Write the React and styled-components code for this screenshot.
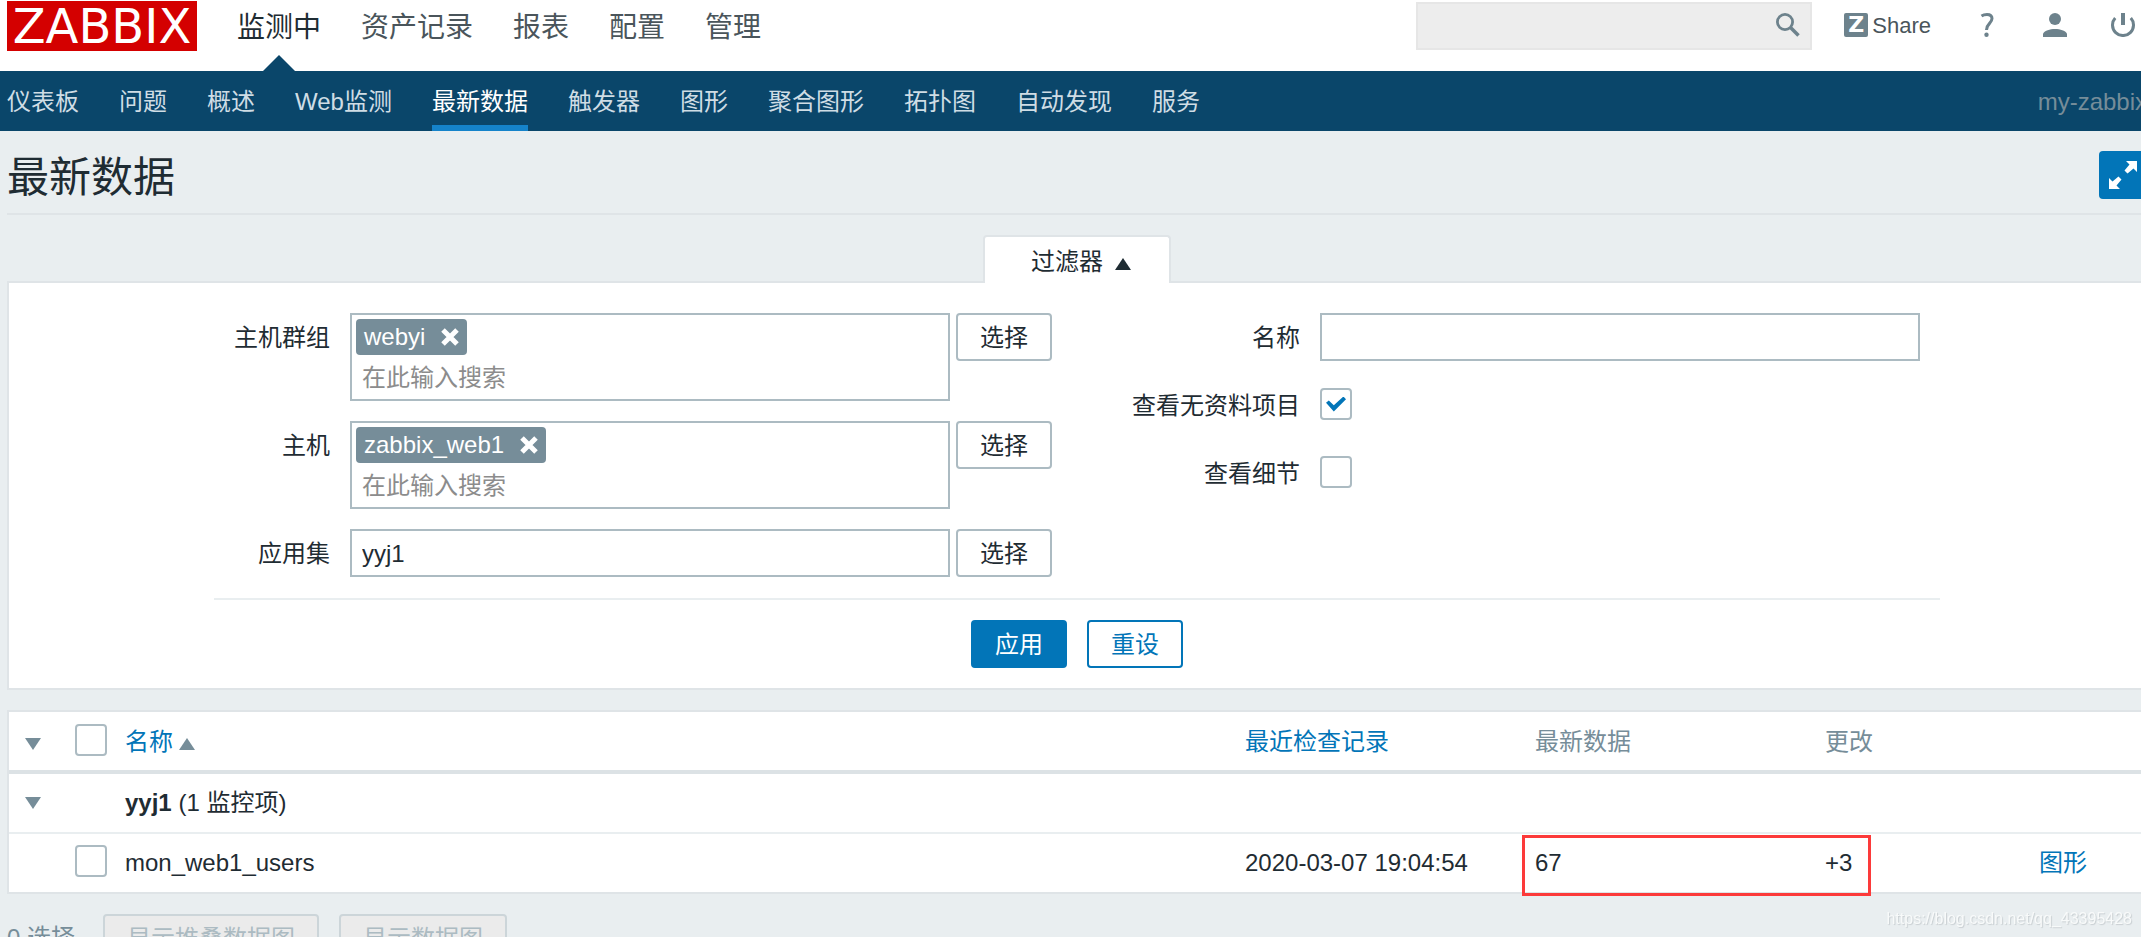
import { useState } from 'react';
import styled, { createGlobalStyle } from 'styled-components';

const menu = ['监测中', '资产记录', '报表', '配置', '管理'];
const submenu = ['仪表板', '问题', '概述', 'Web监测', '最新数据', '触发器', '图形', '聚合图形', '拓扑图', '自动发现', '服务'];

function MultiSelect({ id, label, tag }) {
    return (
        <Row>
            <Label htmlFor={id}>{label}</Label>
            <TagBox>
                <Tag>
                    {tag}
                    <RemoveTag type="button" aria-label="移除">
                        <svg width="18" height="18" viewBox="0 0 18 18">
                            <path d="M2 2L16 16M16 2L2 16" stroke="#fff" strokeWidth="5" />
                        </svg>
                    </RemoveTag>
                </Tag>
                <TagInput id={id} placeholder="在此输入搜索" />
            </TagBox>
            <Button type="button">选择</Button>
        </Row>
    )
}

export default function App() {
    const [showEmpty, setShowEmpty] = useState(true);
    const [details, setDetails] = useState(false);

    return (
        <>
            <GlobalStyle />
            <Page>
                <Top>
                    <Logo href="#">ZABBIX</Logo>
                    <Menu>
                        {menu.map((item, i) => <MenuLink href="#" key={item} $active={i === 0}>{item}</MenuLink>)}
                    </Menu>
                    <SearchBox>
                        <SearchInput aria-label="搜索" />
                        <IconButton type="button" aria-label="搜索">
                            <svg width="24" height="24" viewBox="0 0 24 24" fill="none" stroke="#6d828c">
                                <circle cx="9" cy="9" r="7.6" strokeWidth="2.8" />
                                <path d="M14.5 14.5L22.5 22.5" strokeWidth="3.6" />
                            </svg>
                        </IconButton>
                    </SearchBox>
                    <UserLinks>
                        <Share href="#"><ShareBadge>Z</ShareBadge><ShareText>Share</ShareText></Share>
                        <IconLink href="#" aria-label="帮助">
                            <svg width="24" height="24" viewBox="0 0 24 24" fill="none" stroke="#6d828c" strokeWidth="3">
                                <path d="M6.5 3C8 2 10 1.5 12 1.5C15.5 1.5 17 3.3 17 5.6C17 10.5 11.5 10.5 11.5 17" />
                                <circle cx="11.5" cy="21.8" r="2.2" fill="#6d828c" stroke="none" />
                            </svg>
                        </IconLink>
                        <IconLink href="#" aria-label="用户">
                            <svg width="24" height="24" viewBox="0 0 24 24" fill="#6d828c">
                                <circle cx="12" cy="6" r="6" />
                                <path d="M0 24V20.5C2 17.5 6.5 16 12 16S22 17.5 24 20.5V24Z" />
                            </svg>
                        </IconLink>
                        <IconLink href="#" aria-label="退出">
                            <svg width="24" height="24" viewBox="0 0 24 24" fill="none" stroke="#6d828c">
                                <path d="M12 0V12" strokeWidth="4" />
                                <path d="M4.2 5A10.5 10.5 0 1 0 19.8 5" strokeWidth="3" />
                            </svg>
                        </IconLink>
                    </UserLinks>
                </Top>
                <SubNav>
                    {submenu.map(item => <SubLink href="#" key={item} $active={item === '最新数据'}>{item}</SubLink>)}
                    <Server>my-zabbix</Server>
                </SubNav>
                <Content>
                    <TitleBar>
                        <Title>最新数据</Title>
                        <Expand type="button" aria-label="全屏">
                            <svg width="28" height="28" viewBox="0 0 28 28" fill="#fff">
                                <path d="M17 0H28V11L24.5 7.5L18.5 12.5L15.5 9.5L20.5 3.5Z" />
                                <path d="M0 17V28H11L7.5 24.5L12.5 18.5L9.5 15.5L3.5 20.5Z" />
                            </svg>
                        </Expand>
                    </TitleBar>
                    <FilterTab type="button">过滤器<Triangle $up $gap={12} $color="#1f2c33" /></FilterTab>
                    <Filter>
                        <Fields>
                            <Column>
                                <MultiSelect id="groups" label="主机群组" tag="webyi" />
                                <MultiSelect id="hosts" label="主机" tag="zabbix_web1" />
                                <Row>
                                    <Label htmlFor="application">应用集</Label>
                                    <TextInput id="application" defaultValue="yyj1" />
                                    <Button type="button">选择</Button>
                                </Row>
                            </Column>
                            <Column>
                                <Row>
                                    <Label htmlFor="name">名称</Label>
                                    <TextInput id="name" />
                                </Row>
                                <Row>
                                    <Label htmlFor="empty">查看无资料项目</Label>
                                    <CheckCell>
                                        <Check id="empty" checked={showEmpty} onChange={e => setShowEmpty(e.target.checked)} />
                                    </CheckCell>
                                </Row>
                                <Row>
                                    <Label htmlFor="details">查看细节</Label>
                                    <CheckCell>
                                        <Check id="details" checked={details} onChange={e => setDetails(e.target.checked)} />
                                    </CheckCell>
                                </Row>
                            </Column>
                        </Fields>
                        <Actions>
                            <Button type="button" $primary>应用</Button>
                            <Button type="button" $outline>重设</Button>
                        </Actions>
                    </Filter>
                    <Table>
                        <colgroup>
                            <col width="54" />
                            <col width="50" />
                            <col />
                            <col width="290" />
                            <col width="290" />
                            <col width="214" />
                            <col width="118" />
                        </colgroup>
                        <thead>
                            <tr>
                                <th><Triangle $color="#768d99" /></th>
                                <th><Check aria-label="全选" /></th>
                                <th><a href="#">名称<Triangle $up $gap={6} $color="#768d99" /></a></th>
                                <th><a href="#">最近检查记录</a></th>
                                <th>最新数据</th>
                                <th>更改</th>
                                <th></th>
                            </tr>
                        </thead>
                        <tbody>
                            <tr>
                                <td><Triangle $color="#768d99" /></td>
                                <td></td>
                                <td colSpan="5"><b>yyj1</b> (1 监控项)</td>
                            </tr>
                            <tr>
                                <td></td>
                                <td><Check aria-label="mon_web1_users" /></td>
                                <td>mon_web1_users</td>
                                <td>2020-03-07 19:04:54</td>
                                <MarkedCell>67<Mark /></MarkedCell>
                                <td>+3</td>
                                <td><a href="#">图形</a></td>
                            </tr>
                        </tbody>
                    </Table>
                    <Footer>
                        <Selected>0 选择</Selected>
                        <Button type="button" disabled>显示堆叠数据图</Button>
                        <Button type="button" disabled>显示数据图</Button>
                    </Footer>
                </Content>
            </Page>
            <Watermark>https://blog.csdn.net/qq_43395428</Watermark>
        </>
    )
};

const GlobalStyle = createGlobalStyle`
    * {
        box-sizing: border-box;
    }

    html, body {
        margin: 0;
        height: 100%;
        overflow: hidden;
        background-color: #e9eef0;
    }

    body, button, input {
        font-family: 'Liberation Sans', 'Noto Sans CJK SC', sans-serif;
        font-size: 24px;
        line-height: 28px;
        color: #1f2c33;
    }

    a {
        color: #0275b8;
        text-decoration: none;
    }

    svg {
        display: block;
    }
`;

/* the page is slightly wider than the window */
const Page = styled.div`
    width: calc(100% + 13px);
`;

const Top = styled.header`
    height: 71px;
    background-color: #fff;
    padding: 1px 19px 0 7px;
    display: flex;
    align-items: flex-start;
`;

const Logo = styled.a`
    width: 190px;
    height: 50px;
    background-color: #d40000;
    color: #fff;
    font-family: 'DejaVu Sans', sans-serif;
    font-size: 48px;
    line-height: 50px;
    text-align: center;
`;

const Menu = styled.nav`
    height: 70px;
    margin-left: 20px;
    display: flex;
`;

const MenuLink = styled.a`
    padding: 0 20px;
    font-size: 28px;
    line-height: 54px;
    color: ${props => props.$active ? '#1f2c33' : '#4a555b'};
    display: flex;
    flex-direction: column;
    align-items: center;
    justify-content: space-between;

    &::after {
        content: '';
        display: ${props => props.$active ? 'block' : 'none'};
        border: 16px solid transparent;
        border-top: 0;
        border-bottom-color: #0a466a;
    }
`;

const SearchBox = styled.div`
    width: 396px;
    height: 48px;
    margin: 1px 32px 0 auto;
    padding: 0 10px 2px 0;
    border: 2px solid #e6e6e6;
    background-color: #ededed;
    display: flex;
    align-items: center;
`;

const SearchInput = styled.input`
    flex: 1;
    min-width: 0;
    border: 0;
    outline: 0;
    background: none;
`;

const IconButton = styled.button`
    border: 0;
    padding: 0;
    background: none;
`;

const UserLinks = styled.div`
    height: 48px;
    display: flex;
    align-items: center;
    gap: 44px;
`;

const Share = styled.a`
    display: flex;
    align-items: center;
    gap: 4px;
    font-size: 22px;
    color: #4a555b;
`;

const ShareText = styled.span`
    padding-top: 2px;
`;

const ShareBadge = styled.span`
    width: 24px;
    height: 24px;
    border-radius: 2px;
    background-color: #6d828c;
    color: #fff;
    font-family: 'DejaVu Sans', sans-serif;
    font-size: 22px;
    font-weight: bold;
    line-height: 24px;
    text-align: center;
`;

const IconLink = styled.a`
    display: block;
`;

const SubNav = styled.nav`
    height: 60px;
    background-color: #0a466a;
    padding: 0 7px;
    display: flex;
    gap: 40px;
`;

const SubLink = styled.a`
    height: 60px;
    line-height: 62px;
    color: ${props => props.$active ? '#fff' : '#cfdde5'};
    box-shadow: ${props => props.$active ? 'inset 0 -6px #1583ca' : 'none'};
`;

const Server = styled.span`
    margin-left: auto;
    line-height: 62px;
    color: #768d99;
`;

const Content = styled.main`
    padding: 20px 7px;
    display: flex;
    flex-direction: column;
`;

const TitleBar = styled.div`
    height: 64px;
    margin-bottom: 20px;
    border-bottom: 2px solid #dfe4e7;
    display: flex;
    justify-content: space-between;
`;

const Title = styled.h1`
    margin: 0;
    font-size: 42px;
    font-weight: normal;
    line-height: 54px;
`;

const Expand = styled.button`
    width: 48px;
    height: 48px;
    padding: 0;
    border: 0;
    border-radius: 4px;
    background-color: #0275b8;
    display: flex;
    align-items: center;
    justify-content: center;
`;

const FilterTab = styled.button`
    width: 188px;
    height: 48px;
    padding: 4px 0 0 8px;
    align-self: center;
    margin-bottom: -2px;
    border: 2px solid #dfe4e7;
    border-bottom: 0;
    border-radius: 4px 4px 0 0;
    background-color: #fff;
    z-index: 1;
`;

const Triangle = styled.span`
    display: inline-block;
    margin-left: ${props => props.$gap || 0}px;
    border: 8px solid transparent;
    ${props => props.$up ? 'border-top: 0; border-bottom' : 'border-bottom: 0; border-top'}: 12px solid ${props => props.$color};
`;

const Filter = styled.section`
    border: 2px solid #dfe4e7;
    background-color: #fff;
    padding: 30px 0 20px;
    margin-bottom: 20px;
    display: flex;
    flex-direction: column;
    align-items: center;
`;

const Fields = styled.div`
    padding: 0 20px 21px;
    border-bottom: 2px solid #e9eef0;
    display: flex;
    gap: 80px;
`;

const Column = styled.div`
    display: flex;
    flex-direction: column;
    gap: 20px;
`;

const Row = styled.div`
    display: flex;
    align-items: flex-start;
    justify-content: flex-end;
`;

const Label = styled.label`
    margin-right: 20px;
    padding-top: 2px;
    line-height: 46px;
`;

const TextInput = styled.input`
    width: 600px;
    height: 48px;
    padding: 2px 10px 0;
    border: 2px solid #acbbc2;
    outline: 0;
`;

const TagBox = styled.div`
    width: 600px;
    height: 88px;
    padding: 4px;
    border: 2px solid #acbbc2;
`;

const Tag = styled.span`
    height: 36px;
    width: fit-content;
    padding: 0 8px;
    border-radius: 4px;
    background-color: #768d99;
    color: #fff;
    display: flex;
    align-items: center;
    gap: 16px;
`;

const RemoveTag = styled.button`
    padding: 0;
    border: 0;
    background: none;
`;

const TagInput = styled.input`
    width: 100%;
    height: 44px;
    padding: 2px 6px 0;
    border: 0;
    outline: 0;
    background: none;

    &::placeholder {
        color: #8c8c8c;
    }
`;

const Button = styled.button`
    height: 48px;
    padding: 2px 22px 0;
    border: 2px solid #acbbc2;
    border-radius: 4px;
    background-color: ${props => props.$primary ? '#0275b8' : '#fff'};
    ${props => props.$primary && 'color: #fff;'}
    ${props => props.$outline && 'color: #0275b8;'}
    ${props => (props.$primary || props.$outline) && 'border-color: #0275b8;'}

    ${Row} & {
        margin-left: 6px;
    }

    &:disabled {
        color: #acbbc2;
        border-color: #ccd5d9;
        background-color: #ebebeb;
    }
`;

const CheckCell = styled.div`
    width: 600px;
    height: 46px;
    display: flex;
    align-items: center;
`;

const Check = styled.input.attrs({ type: 'checkbox' })`
    appearance: none;
    width: 32px;
    height: 32px;
    margin: 0;
    border: 2px solid #acbbc2;
    border-radius: 4px;
    background-color: #fff;
    display: inline-grid;
    place-content: center;
    vertical-align: middle;

    &:checked::before {
        content: '';
        width: 20px;
        height: 15px;
        background-color: #0275b8;
        clip-path: polygon(0 42%, 14% 26%, 39% 58%, 87% 0, 100% 18%, 39% 100%);
    }
`;

const Actions = styled.div`
    padding-top: 20px;
    display: flex;
    gap: 20px;
`;

const Table = styled.table`
    width: 100%;
    table-layout: fixed;
    border-collapse: separate;
    border-spacing: 0;
    border: 2px solid #dfe4e7;
    background-color: #fff;

    th, td {
        height: 60px;
        padding: 0 0 0 12px;
        text-align: left;
        font-weight: normal;
        white-space: nowrap;
        border-bottom: 2px solid #e9eef0;
    }

    th {
        height: 62px;
        padding-top: 2px;
        color: #768d99;
        border-bottom: 4px solid #dce2e5;
    }

    th:first-child, td:first-child {
        padding-left: 16px;
    }

    th:nth-child(2), td:nth-child(2), td:first-child {
        padding-bottom: 4px;
    }

    tbody tr:last-child td {
        height: 58px;
        border-bottom: 0;
    }
`;

const MarkedCell = styled.td`
    position: relative;
`;

/* red frame over the last value and its change */
const Mark = styled.span`
    position: absolute;
    top: 1px;
    left: -1px;
    width: 349px;
    height: 61px;
    border: 3px solid #fc3a3a;
`;

const Footer = styled.footer`
    margin-top: 20px;
    display: flex;
    align-items: center;
    gap: 20px;
`;

const Selected = styled.span`
    width: 76px;
    color: #768d99;
`;

const Watermark = styled.div`
    position: fixed;
    right: 9px;
    bottom: 8px;
    font-size: 16px;
    line-height: 20px;
    color: #f8fafa;
    text-shadow: 1px 1px 1px #c8ced1;
`;
